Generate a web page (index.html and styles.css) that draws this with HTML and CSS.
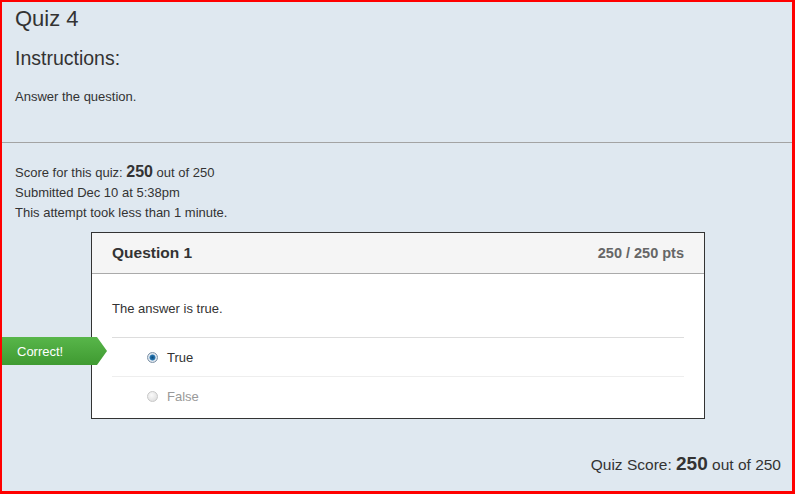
FILE: index.html
```html
<!DOCTYPE html>
<html>
<head>
<meta charset="utf-8">
<link rel="stylesheet" href="styles.css">
</head>
<body>
<div class="page">
  <div class="intro">
    <h1 class="title">Quiz 4</h1>
    <h2 class="subtitle">Instructions:</h2>
    <p class="instr">Answer the question.</p>
  </div>
  <div class="results">
    <div class="meta">
      <div>Score for this quiz: <strong class="big">250</strong> out of 250</div>
      <div>Submitted Dec 10 at 5:38pm</div>
      <div>This attempt took less than 1 minute.</div>
    </div>
    <div class="question-wrap">
      <div class="badge">Correct!</div>
      <div class="question">
        <div class="q-header">
          <span class="q-name">Question 1</span>
          <span class="q-pts">250 / 250 pts</span>
        </div>
        <div class="q-body">
          <p class="q-text">The answer is true.</p>
          <div class="answers">
            <div class="answer">
              <span class="radio checked"></span>
              <span class="label">True</span>
            </div>
            <div class="answer disabled">
              <span class="radio"></span>
              <span class="label">False</span>
            </div>
          </div>
        </div>
      </div>
    </div>
    <div class="total">Quiz Score: <strong class="total-num">250</strong> out of 250</div>
  </div>
</div>
</body>
</html>
```
FILE: styles.css
```css
html, body {
  margin: 0;
  padding: 0;
}
body {
  font-family: "Liberation Sans", Arial, sans-serif;
  color: #333;
}
.page {
  width: 795px;
  height: 494px;
  box-sizing: border-box;
  border-style: solid;
  border-color: #ff0000;
  border-width: 2px 3px 3px 2px;
  background: #dfe8f0;
  display: flex;
  flex-direction: column;
}
.intro {
  padding: 4px 13px 0;
  height: 141px;
  box-sizing: border-box;
  border-bottom: 1px solid #a3a3a3;
}
.title {
  margin: 0;
  font-size: 22px;
  font-weight: normal;
  line-height: 26px;
}
.subtitle {
  margin: 14px 0 0;
  font-size: 19.5px;
  font-weight: normal;
  line-height: 24px;
}
.instr {
  margin: 18px 0 0;
  font-size: 13px;
  line-height: 18px;
}
.results {
  flex: 1;
  display: flex;
  flex-direction: column;
  padding: 19px 0 0;
}
.meta {
  padding: 0 13px;
  font-size: 13px;
  line-height: 20px;
}
.big {
  font-size: 16px;
}
.question-wrap {
  position: relative;
  margin: 9px 0 0 89px;
  width: 614px;
}
.question {
  border: 1px solid #333;
  background: #fff;
}
.q-header {
  height: 40px;
  background: #f5f5f5;
  border-bottom: 1px solid #aaa;
  display: flex;
  align-items: center;
  justify-content: space-between;
  padding: 0 20px;
}
.q-name {
  font-weight: bold;
  font-size: 15.5px;
}
.q-pts {
  font-weight: bold;
  font-size: 14.5px;
  color: #666;
}
.q-body {
  padding: 26px 20px 3px;
}
.q-text {
  margin: 0;
  font-size: 13px;
  line-height: 18px;
}
.answers {
  margin-top: 19px;
}
.answer {
  height: 38px;
  border-top: 1px solid #ddd;
  display: flex;
  align-items: center;
  padding-left: 35px;
  font-size: 13px;
}
.answer + .answer {
  border-top-color: #eee;
}
.answer.disabled {
  color: #999;
}
.radio {
  width: 11px;
  height: 11px;
  border-radius: 50%;
  box-sizing: border-box;
  margin-right: 9px;
  border: 1px solid #c8c8c8;
  background: radial-gradient(circle at 40% 35%, #fafafa, #d9d9d9);
}
.radio.checked {
  border: 1px solid #7e93a8;
  background: radial-gradient(circle, #0d4d7d 0, #2a78b3 2.6px, #e7eef5 3.4px, #cfd8e2 5px);
}
.badge {
  position: absolute;
  left: -89px;
  top: 105px;
  width: 105px;
  height: 28px;
  box-sizing: border-box;
  padding-left: 15px;
  display: flex;
  align-items: center;
  color: #fff;
  font-size: 13px;
  background: linear-gradient(#58b64a, #3f9a31);
  clip-path: polygon(0 0, 95px 0, 105px 50%, 95px 100%, 0 100%);
  z-index: 2;
}
.total {
  margin-top: auto;
  padding: 0 11px 14px 0;
  text-align: right;
  font-size: 15.5px;
  line-height: 24px;
}
.total-num {
  font-size: 19px;
}
```
